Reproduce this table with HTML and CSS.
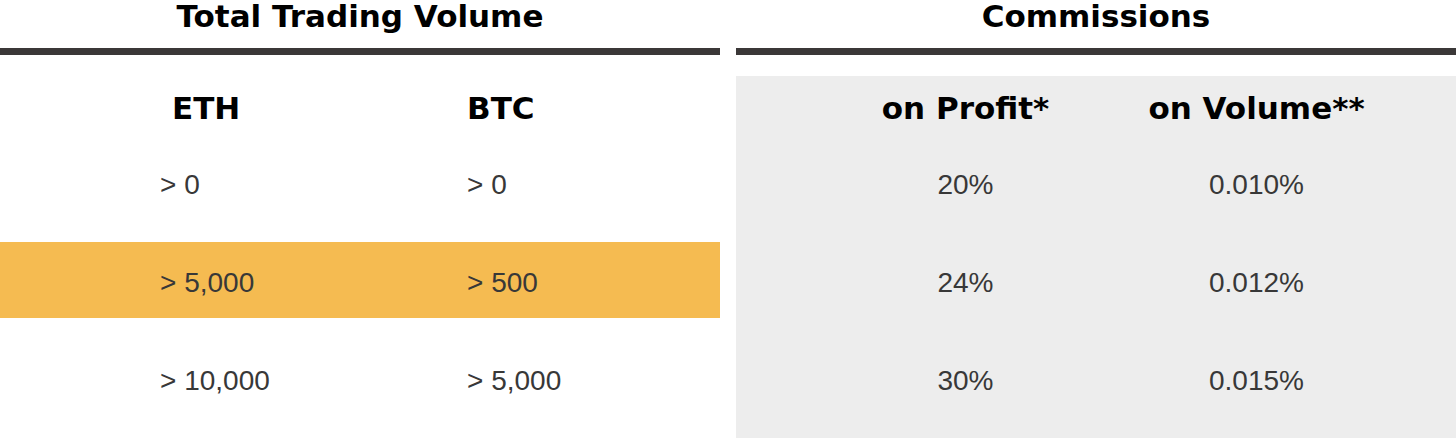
FILE: index.html
```html
<!DOCTYPE html>
<html>
<head>
<meta charset="utf-8">
<link rel="stylesheet" href="styles.css">
</head>
<body>
<div class="page">
  <section class="block">
    <h2 class="title">Total Trading Volume</h2>
    <div class="bar"></div>
    <div class="table volume">
      <div class="row head"><div class="cell eth-h">ETH</div><div class="cell">BTC</div></div>
      <div class="row first"><div class="cell">&gt; 0</div><div class="cell">&gt; 0</div></div>
      <div class="row hl"><div class="cell">&gt; 5,000</div><div class="cell">&gt; 500</div></div>
      <div class="row"><div class="cell">&gt; 10,000</div><div class="cell">&gt; 5,000</div></div>
    </div>
  </section>
  <section class="block">
    <h2 class="title">Commissions</h2>
    <div class="bar"></div>
    <div class="table comm">
      <div class="row head"><div class="cell">on Profit*</div><div class="cell">on Volume**</div></div>
      <div class="row first"><div class="cell">20%</div><div class="cell">0.010%</div></div>
      <div class="row"><div class="cell">24%</div><div class="cell">0.012%</div></div>
      <div class="row"><div class="cell">30%</div><div class="cell">0.015%</div></div>
    </div>
  </section>
</div>
</body>
</html>
```

FILE: styles.css
```css
html, body {
  margin: 0;
  padding: 0;
  background: #ffffff;
}
.page {
  display: flex;
  gap: 16px;
  width: 1456px;
}
.block {
  flex: 0 0 720px;
  display: flex;
  flex-direction: column;
}
.title {
  margin: 0;
  height: 48px;
  font-family: "DejaVu Sans", sans-serif;
  font-weight: bold;
  font-size: 31px;
  line-height: 32px;
  color: #000;
  text-align: center;
}
.bar {
  height: 7px;
  background: #3b3838;
}
.table {
  margin-top: 21px;
  display: flex;
  flex-direction: column;
  gap: 22px;
  padding-bottom: 22px;
}
.comm {
  background: #ededed;
}
.row {
  display: grid;
  height: 76px;
  align-items: center;
  font-family: "Liberation Sans", Arial, sans-serif;
  font-size: 28px;
  color: #383838;
}
.row .cell {
  padding-top: 5px;
}
.row.head .cell {
  padding-top: 0;
}
.row.head {
  height: 64px;
  font-family: "DejaVu Sans", sans-serif;
  font-weight: bold;
  font-size: 31px;
  color: #000;
}
.row.first {
  margin-top: -18px;
}
.volume .row {
  grid-template-columns: 307px 1fr;
  padding-left: 160px;
}
.volume .eth-h {
  padding-left: 12px;
}
.comm .row {
  grid-template-columns: 291px 291px;
  padding-left: 84px;
  text-align: center;
}
.hl {
  background: #f5bb51;
}
```
